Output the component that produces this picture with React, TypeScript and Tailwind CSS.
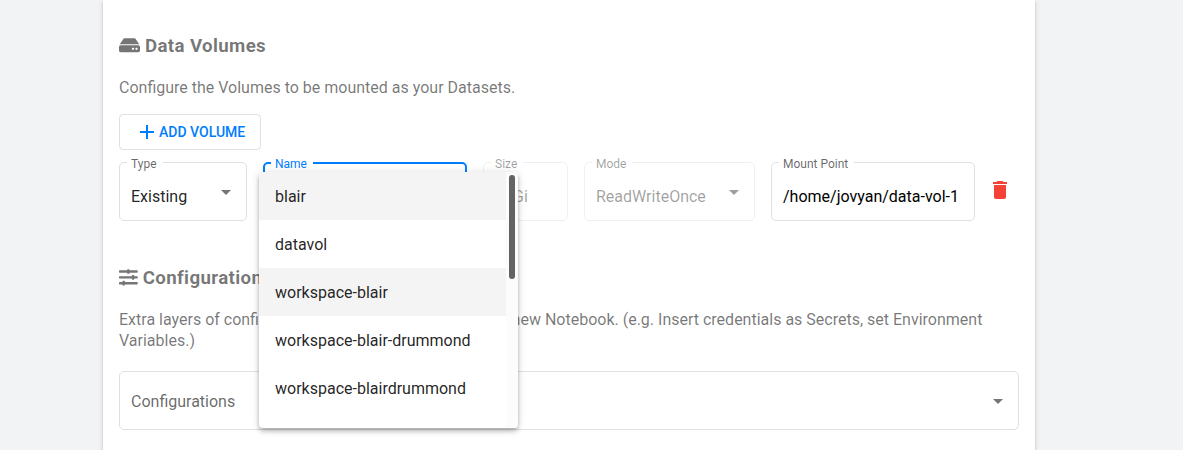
import type { ReactNode } from 'react';
import { FaHdd, FaSlidersH } from 'react-icons/fa';
import { MdAdd, MdDelete } from 'react-icons/md';

function Arrow({ className }: { className: string }) {
  return (
    <svg viewBox="0 0 10 5" className={`h-[5px] w-[10px] shrink-0 ${className}`}>
      <path d="M0 0h10L5 5z" fill="currentColor" />
    </svg>
  );
}

type FieldProps = {
  label?: string;
  box: string;
  labelClass?: string;
  children?: ReactNode;
};

function Field({ label, box, labelClass = '', children }: FieldProps) {
  return (
    <div className={`relative flex h-[59px] shrink-0 items-center justify-between rounded-[5px] ${box}`}>
      {label && (
        <span className={`absolute bg-white pr-1.5 pl-1 text-[12px] leading-[16px] whitespace-nowrap ${labelClass}`}>
          {label}
        </span>
      )}
      {children}
    </div>
  );
}

const volumes = [
  { name: 'blair', active: true },
  { name: 'datavol', active: false },
  { name: 'workspace-blair', active: true },
  { name: 'workspace-blair-drummond', active: false },
  { name: 'workspace-blairdrummond', active: false },
];

function VolumeMenu() {
  return (
    <div className="absolute top-2 -left-1.5 z-10 flex h-64 w-[259px] overflow-hidden rounded bg-white shadow-[0_2px_4px_-1px_rgba(0,0,0,0.2),0_4px_5px_0_rgba(0,0,0,0.14),0_1px_10px_0_rgba(0,0,0,0.12)]">
      <ul className="w-[247px] overflow-hidden">
        {volumes.map((v) => (
          <li
            key={v.name}
            className={`h-12 px-4 pt-px text-[16px] leading-[48px] whitespace-nowrap text-black/87 ${v.active ? 'bg-[#f4f4f4]' : ''}`}
          >
            {v.name}
          </li>
        ))}
      </ul>
      <div className="flex w-3 justify-center bg-[#fcfcfc] pt-[3px]">
        <div className="h-[104px] w-1.5 rounded-full bg-[#636363]" />
      </div>
    </div>
  );
}

export default function App() {
  return (
    <div className="flex h-[450px] overflow-hidden bg-[#f1f3f4] pl-[103px] font-[Roboto,sans-serif] text-[16px] text-black/54">
      <main className="h-[470px] w-[932px] shrink-0 bg-white px-4 shadow-[0_3px_1px_-2px_rgba(0,0,0,0.2),0_2px_2px_0_rgba(0,0,0,0.14),0_1px_5px_0_rgba(0,0,0,0.12)]">
        <h3 className="flex items-center gap-[5px] pt-[34px] text-[18.72px] leading-[22px] font-bold tracking-[0.35px]">
          <FaHdd className="h-[18.72px] w-[21px]" />
          <span className="pt-px">Data Volumes</span>
        </h3>
        <p className="mt-5 leading-[21px]">Configure the Volumes to be mounted as your Datasets.</p>
        <button className="mt-4 flex h-9 w-[142px] items-center rounded border border-black/12 pl-[15px] text-[14px] font-medium text-[#007dfc]">
          <MdAdd className="h-6 w-6 shrink-0" />
          ADD VOLUME
        </button>

        <div className="mt-3 flex gap-4">
          <Field label="Type" box="w-[128px] border border-black/12 pl-[11px] pr-[15px]" labelClass="-top-[7px] left-[7px] text-black/60">
            <span className="pt-[11px] text-black/87">Existing</span>
            <Arrow className="mt-[2px] text-black/54" />
          </Field>
          <Field label="Name" box="w-[204px] border-2 border-[#007dfc]" labelClass="-top-2 left-[6px] text-[#007dfc]">
            <VolumeMenu />
          </Field>
          <Field label="Size" box="w-[85px] border border-black/6 pl-[11px]" labelClass="-top-[7px] left-[7px] text-black/38">
            <span className="pt-[11px] text-black/38">10Gi</span>
          </Field>
          <Field label="Mode" box="w-[171px] border border-black/6 pl-[11px] pr-[15px]" labelClass="-top-[7px] left-[7px] text-black/38">
            <span className="pt-[11px] text-black/38">ReadWriteOnce</span>
            <Arrow className="mt-[2px] text-black/38" />
          </Field>
          <Field label="Mount Point" box="w-[204px] border border-black/12 pl-[11px]" labelClass="-top-[7px] left-[7px] text-black/60">
            <span className="pt-[11px] text-black">/home/jovyan/data-vol-1</span>
          </Field>
          <button className="ml-[-3px] flex h-14 w-6 items-center text-[#f44336]">
            <MdDelete className="h-6 w-6" />
          </button>
        </div>

        <h3 className="mt-[45px] flex items-center gap-[5px] text-[18.72px] leading-[22px] font-bold tracking-[0.35px]">
          <FaSlidersH className="h-[18.72px] w-[18.72px]" />
          <span className="pt-px">Configurations</span>
        </h3>
        <p className="mt-5 w-[885px] leading-[21px]">
          Extra layers of configurations that will be applied to the new Notebook. (e.g. Insert credentials as Secrets, set Environment
          <br />
          Variables.)
        </p>
        <div className="mt-5">
          <Field box="w-full border border-black/12 pl-[11px] pr-[15px]">
            <span className="pt-[3px] text-black/60">Configurations</span>
            <Arrow className="mt-px text-black/54" />
          </Field>
        </div>
      </main>
    </div>
  );
}
